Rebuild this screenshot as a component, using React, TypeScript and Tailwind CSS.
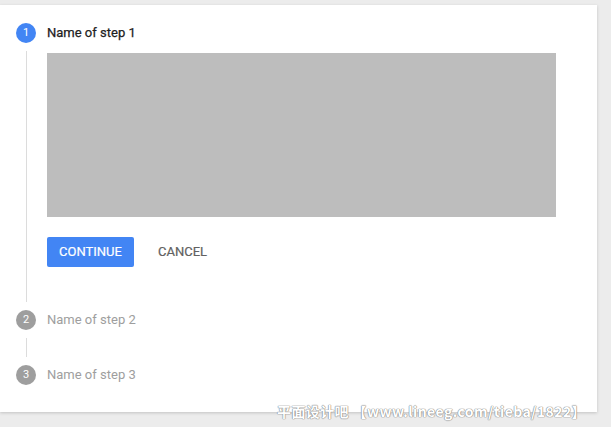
import React from "react";

type StepState = "active" | "inactive";

function StepHeader({ num, label, state }: { num: number; label: string; state: StepState }) {
  const active = state === "active";
  return (
    <div className="flex h-5 items-center">
      <div
        className={`flex h-5 w-5 items-center justify-center rounded-full text-[11px] text-white ${
          active ? "bg-[#4285f4]" : "bg-[#9e9e9e]"
        }`}
      >
        {num}
      </div>
      <span
        className={`ml-[11px] text-[13px] ${
          active ? "text-[#212121] [-webkit-text-stroke:0.25px_#212121]" : "text-[#9e9e9e]"
        }`}
      >
        {label}
      </span>
    </div>
  );
}

function Connector({ children, height }: { children?: React.ReactNode; height?: string }) {
  return (
    <div className={`flex ${height ?? ""}`}>
      <div className="flex w-[31px] shrink-0 justify-start pl-[10px]">
        <div className="my-2 w-px bg-[#dcdcdc]" />
      </div>
      <div className="flex-1">{children}</div>
    </div>
  );
}

export default function App() {
  return (
    <div className="relative h-[427px] w-[611px] overflow-hidden bg-[#ececec] font-['Roboto',sans-serif]">
      <div className="mt-[5px] h-[407px] w-[597px] bg-white pl-4 pt-[18px] shadow-[0_1px_3px_rgba(0,0,0,0.18)]">
        <StepHeader num={1} label="Name of step 1" state="active" />
        <Connector>
          <div className="pt-[10px] pb-[43px]">
            <div className="h-[164px] w-[509px] bg-[#bdbdbd]" />
            <div className="mt-5 flex items-center">
              <button className="h-[30px] w-[87px] rounded-[2px] bg-[#4285f4] text-[13px] text-white [-webkit-text-stroke:0.2px_#fff]">
                CONTINUE
              </button>
              <button className="ml-6 text-[13px] text-[#616161] [-webkit-text-stroke:0.2px_#616161]">
                CANCEL
              </button>
            </div>
          </div>
        </Connector>
        <StepHeader num={2} label="Name of step 2" state="inactive" />
        <Connector height="h-[35px]" />
        <StepHeader num={3} label="Name of step 3" state="inactive" />
      </div>
      <div className="absolute left-[277px] top-[401px] whitespace-nowrap font-['Noto_Sans_CJK_SC',sans-serif] text-[14px] font-bold tracking-[0.4px] text-white [text-shadow:0_0_1px_#888,0_0_1px_#888,0_0_1px_#888]">
        平面设计吧 【www.lineeg.com/tieba/1822】
      </div>
    </div>
  );
}
